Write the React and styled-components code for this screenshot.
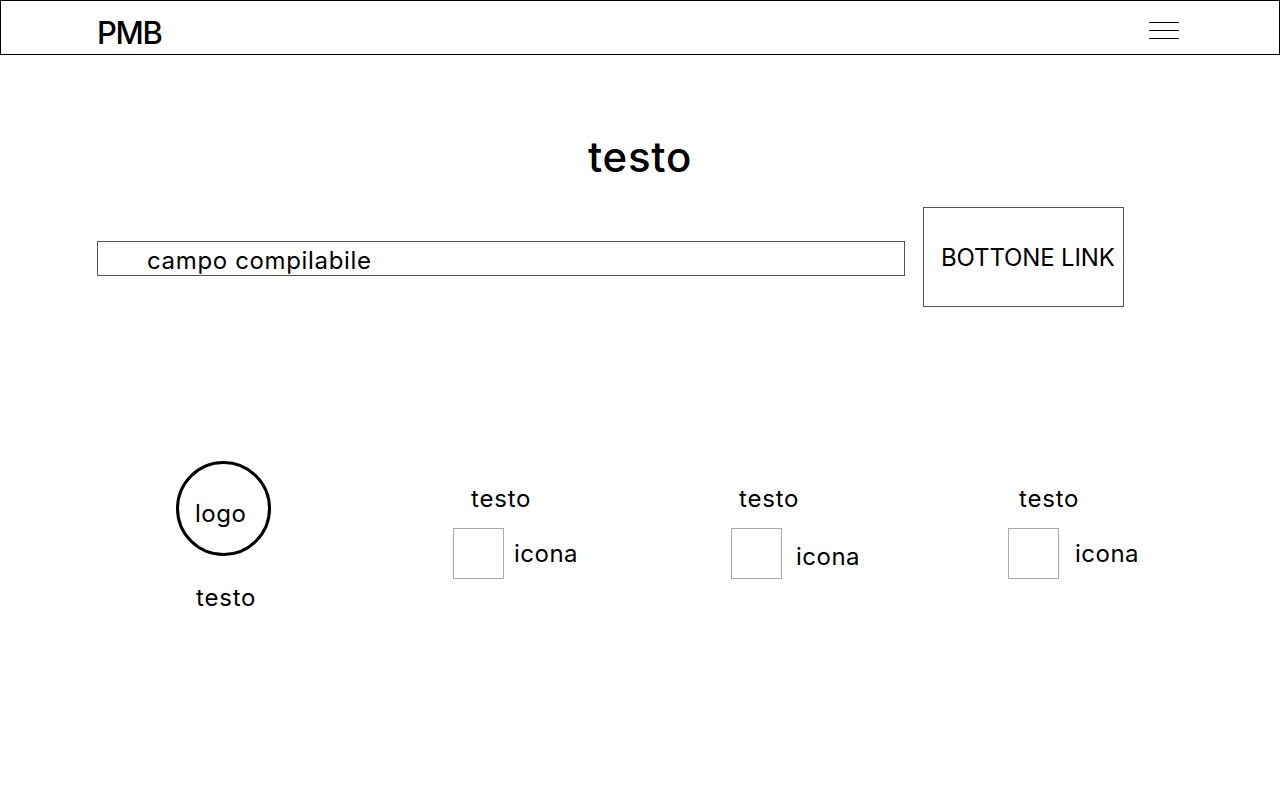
import React from "react";
import styled, { createGlobalStyle } from "styled-components";

const Global = createGlobalStyle`
  html, body { margin: 0; padding: 0; background: #fff; }
  body { font-family: Inter, "Noto Sans", sans-serif; color: #000; }
  * { box-sizing: border-box; }
`;

const Header = styled.header`
  height: 55px;
  border: 1px solid #000;
  display: flex;
  align-items: center;
  justify-content: space-between;
  padding: 0 100px 0 96px;
`;

const Brand = styled.div`
  font-size: 31px;
  font-weight: 500;
  letter-spacing: -1.3px;
  padding-top: 9px;
`;

const Burger = styled.div`
  width: 30px;
  display: flex;
  flex-direction: column;
  gap: 7px;
  margin-top: 5px;
  span { display: block; height: 1px; background: #000; }
`;

const Main = styled.main`
  padding: 0 97px;
`;

const Title = styled.h1`
  margin: 76px 0 0;
  text-align: center;
  font-size: 42px;
  font-weight: 500;
  line-height: 52px;
  letter-spacing: 0.7px;
`;

const SearchRow = styled.div`
  margin-top: 24px;
  display: flex;
  align-items: center;
  gap: 18px;
`;

const Field = styled.div`
  width: 808px;
  height: 35px;
  margin-top: 3px;
  border: 1px solid #555;
  padding-left: 49px;
  font-size: 24px;
  line-height: 37px;
  letter-spacing: 0.65px;
  overflow: visible;
  white-space: nowrap;
`;

const LinkButton = styled.div`
  width: 201px;
  height: 100px;
  border: 1px solid #555;
  display: flex;
  align-items: center;
  padding-left: 17px;
  font-size: 24px;
  letter-spacing: -0.15px;
  white-space: nowrap;
`;

const Features = styled.section`
  margin-top: 154px;
  display: grid;
  grid-template-columns: 278px 278px 277px 277px;
`;

const LogoCol = styled.div`
  padding-left: 79px;
  display: flex;
  flex-direction: column;
`;

const Circle = styled.div`
  width: 95px;
  height: 95px;
  border: 3px solid #000;
  border-radius: 50%;
  display: flex;
  align-items: center;
  padding-left: 16px;
  padding-top: 10px;
  font-size: 24px;
  letter-spacing: 0.5px;
`;

const Caption = styled.div`
  font-size: 24px;
  letter-spacing: 0.8px;
  line-height: 30px;
  padding-left: ${(p) => p.$indent || 0}px;
  margin-top: ${(p) => p.$top || 0}px;
`;

const FeatureCol = styled.div`
  padding-left: 78px;
  padding-top: 23px;
  display: flex;
  flex-direction: column;
`;

const IconRow = styled.div`
  margin-top: 14px;
  display: flex;
  align-items: center;
  gap: ${(p) => p.$gap}px;
`;

const IconBox = styled.div`
  width: 51px;
  height: 51px;
  border: 1px solid #aaa;
  flex: none;
`;

const IconLabel = styled.span`
  font-size: 24px;
  letter-spacing: 0.5px;
  padding-top: ${(p) => p.$drop || 0}px;
`;

const features = [
  { indent: 18, gap: 10, drop: 0 },
  { indent: 8, gap: 14, drop: 6 },
  { indent: 11, gap: 16, drop: 0 },
];

export default function App() {
  return (
    <>
      <Global />
      <Header>
        <Brand>PMB</Brand>
        <Burger>
          <span />
          <span />
          <span />
        </Burger>
      </Header>
      <Main>
        <Title>testo</Title>
        <SearchRow>
          <Field>campo compilabile</Field>
          <LinkButton>BOTTONE LINK</LinkButton>
        </SearchRow>
        <Features>
          <LogoCol>
            <Circle>logo</Circle>
            <Caption $indent={20} $top={27}>testo</Caption>
          </LogoCol>
          {features.map((f, i) => (
            <FeatureCol key={i}>
              <Caption $indent={f.indent}>testo</Caption>
              <IconRow $gap={f.gap}>
                <IconBox />
                <IconLabel $drop={f.drop}>icona</IconLabel>
              </IconRow>
            </FeatureCol>
          ))}
        </Features>
      </Main>
    </>
  );
}
